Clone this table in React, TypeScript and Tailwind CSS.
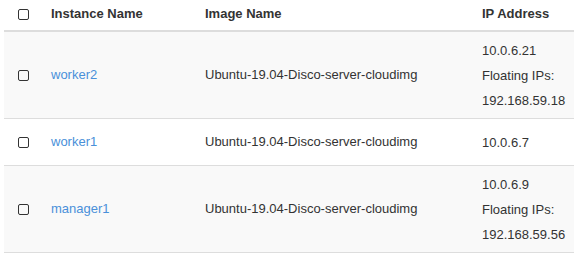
const rows = [
  { name: "worker2", image: "Ubuntu-19.04-Disco-server-cloudimg", ip: "10.0.6.21", floating: "192.168.59.18" },
  { name: "worker1", image: "Ubuntu-19.04-Disco-server-cloudimg", ip: "10.0.6.7" },
  { name: "manager1", image: "Ubuntu-19.04-Disco-server-cloudimg", ip: "10.0.6.9", floating: "192.168.59.56" },
];

const Box = () => (
  <span className="inline-block h-[11px] w-[11px] rounded-[2px] border-[1.5px] border-[#333] align-middle" />
);

export default function App() {
  return (
    <div className="h-[255px] w-[574px] overflow-hidden bg-white pl-[4px] font-['Liberation_Sans',Arial,sans-serif] text-[13px] text-[#333]">
      <table className="w-[600px] table-fixed border-collapse">
        <colgroup>
          <col className="w-[39px]" />
          <col className="w-[154px]" />
          <col className="w-[277px]" />
          <col />
        </colgroup>
        <thead>
          <tr className="h-[31px] border-b-2 border-[#ddd]">
            <th className="pb-[3px] text-center align-middle">
              <Box />
            </th>
            <th className="px-2 pb-[3px] text-left align-middle font-bold">Instance Name</th>
            <th className="px-2 pb-[3px] text-left align-middle font-bold">Image Name</th>
            <th className="px-2 pb-[3px] text-left align-middle font-bold">IP Address</th>
          </tr>
        </thead>
        <tbody>
          {rows.map((r, i) => (
            <tr key={r.name} className={`border-b border-[#ddd] ${i % 2 === 0 ? "bg-[#f9f9f9]" : "bg-white"}`}>
              <td className="h-[47px] py-[5.5px] text-center align-middle">
                <Box />
              </td>
              <td className="px-2 py-[5.5px] align-middle">
                <a className="text-[#4a90d9]" href="#">{r.name}</a>
              </td>
              <td className="px-2 py-[5.5px] align-middle">{r.image}</td>
              <td className="px-2 py-[5.5px] align-middle leading-[25px]">
                <div>{r.ip}</div>
                {r.floating && (
                  <>
                    <div>Floating IPs:</div>
                    <div>{r.floating}</div>
                  </>
                )}
              </td>
            </tr>
          ))}
        </tbody>
      </table>
    </div>
  );
}
